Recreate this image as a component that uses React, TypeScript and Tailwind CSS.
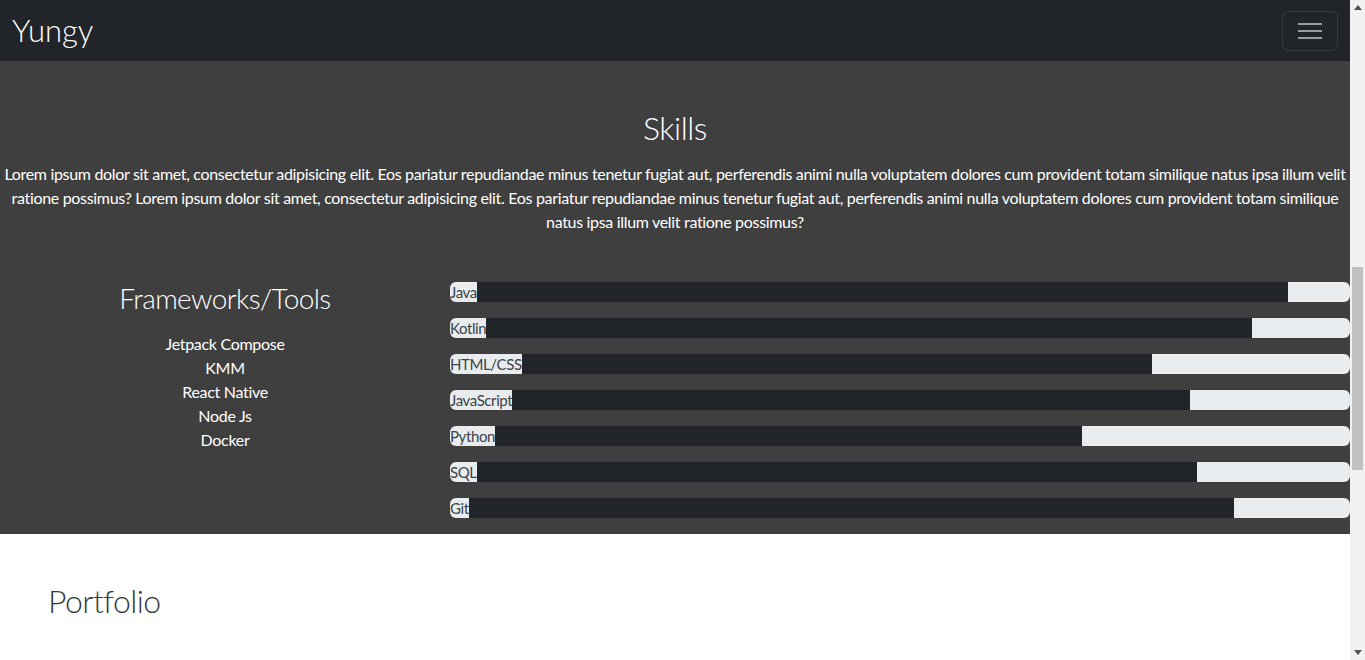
import React from 'react';

const skills = [
  { name: 'Java', pct: 93.1 },
  { name: 'Kotlin', pct: 89.1 },
  { name: 'HTML/CSS', pct: 78 },
  { name: 'JavaScript', pct: 82.2 },
  { name: 'Python', pct: 70.2 },
  { name: 'SQL', pct: 83 },
  { name: 'Git', pct: 87.1 },
];

const tools = ['Jetpack Compose', 'KMM', 'React Native', 'Node Js', 'Docker'];

const lorem =
  'Lorem ipsum dolor sit amet, consectetur adipisicing elit. Eos pariatur repudiandae minus tenetur fugiat aut, perferendis animi nulla voluptatem dolores cum provident totam similique natus ipsa illum velit ratione possimus?';

export default function App() {
  return (
    <div className="font-['Lato','Open_Sans',sans-serif] text-white w-[1350px]">
      <nav className="bg-[#212529] h-[61px] flex items-center justify-between pl-3 pr-3">
        <span className="text-[31px] font-light leading-none">Yungy</span>
        <button className="w-14 h-10 border border-white/10 rounded-md flex flex-col items-center justify-center gap-[5px]">
          <span className="block w-6 h-[2px] bg-[#9a9da0]"></span>
          <span className="block w-6 h-[2px] bg-[#9a9da0]"></span>
          <span className="block w-6 h-[2px] bg-[#9a9da0]"></span>
        </button>
      </nav>

      <section className="bg-[#3f3f3f] pt-12 pb-4">
        <h2 className="text-center text-[32px] font-light leading-[1.2] mb-[15px] tracking-[-0.5px]">Skills</h2>
        <p className="text-center text-base leading-6 tracking-[-0.32px]">
          {lorem} {lorem}
        </p>

        <div className="grid grid-cols-3 mt-12">
          <div className="text-center">
            <h3 className="text-[28px] font-light leading-[1.2] mb-4 tracking-[-0.6px]">Frameworks/Tools</h3>
            <ul className="text-base leading-6 tracking-[-0.3px]">
              {tools.map((t) => (
                <li key={t}>{t}</li>
              ))}
            </ul>
          </div>
          <div className="col-span-2 flex flex-col gap-4">
            {skills.map((s) => (
              <div key={s.name} className="h-5 bg-[#e9ecef] rounded-md overflow-hidden">
                <div className="h-full flex" style={{ width: `${s.pct}%` }}>
                  <span className="text-[#3d4247] text-[15px] leading-5 tracking-[-0.4px]">{s.name}</span>
                  <div className="flex-1 bg-[#212529]"></div>
                </div>
              </div>
            ))}
          </div>
        </div>
      </section>

      <section className="bg-white text-[#343a40] px-12 pt-12 pb-96">
        <h2 className="text-[32px] font-light leading-[1.2] tracking-[-0.6px]">Portfolio</h2>
      </section>

      {/* browser scrollbar as seen in the shot */}
      <div className="fixed top-0 right-0 w-[15px] h-screen bg-[#f1f1f1] flex flex-col items-center">
        <span className="mt-[5px] w-0 h-0 border-l-[4px] border-r-[4px] border-b-[5px] border-l-transparent border-r-transparent border-b-[#505050]"></span>
        <div className="mt-[257px] w-[11px] h-[203px] bg-[#c1c1c1]"></div>
        <span className="mt-auto mb-[5px] w-0 h-0 border-l-[4px] border-r-[4px] border-t-[5px] border-l-transparent border-r-transparent border-t-[#505050]"></span>
      </div>
    </div>
  );
}
